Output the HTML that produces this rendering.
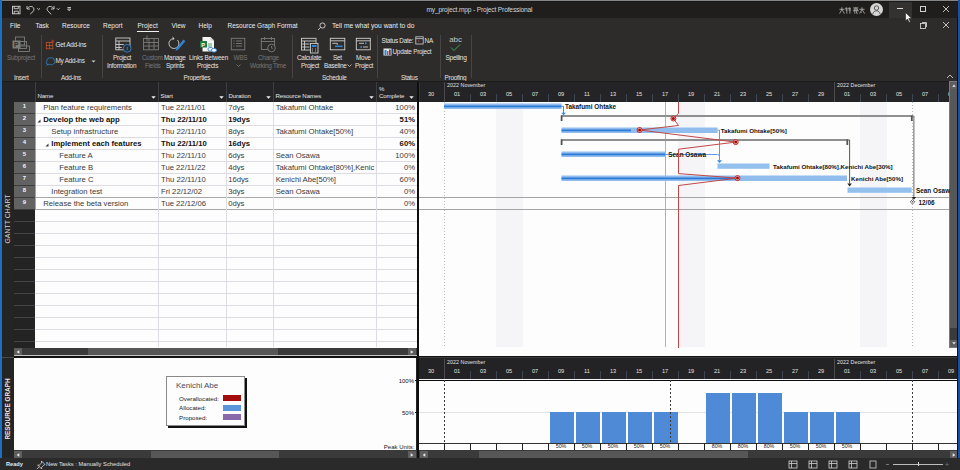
<!DOCTYPE html>
<html><head><meta charset="utf-8">
<style>
*{margin:0;padding:0;box-sizing:border-box}
html,body{width:960px;height:470px;overflow:hidden;background:#232323;font-family:"Liberation Sans",sans-serif}
.a{position:absolute}
.t{position:absolute;white-space:nowrap;line-height:1}
.tab{font-size:6.5px;color:#ececec;top:23.3px}
.rl{color:#e4e4e4}
.rd{color:#777}
.grp{font-size:6.4px;color:#e2e2e2;top:74.7px;letter-spacing:-0.25px}
.sep{width:1px;background:#464543;top:35px;height:43px}
</style></head><body>
<!-- TITLE BAR -->
<div class="a" style="left:0;top:0;width:960px;height:17.5px;background:#1f1e1d"></div>
<div class="a" style="left:0;top:0;width:960px;height:1px;background:#858585"></div>
<div class="a" style="left:0;top:1px;width:960px;height:1px;background:#181818"></div>
<!-- qat icons -->
<svg class="a" style="left:0;top:0" width="80" height="17" viewBox="0 0 80 17">
 <g fill="none" stroke="#d2d2d2" stroke-width="0.9">
  <rect x="12.5" y="6.3" width="7.5" height="7.5"/>
  <path d="M14.2 6.3v2.4h4.1V6.3M14.2 13.8v-2.6h4.1v2.6"/>
  <path d="M27 6v3h3"/>
  <path d="M27.3 8.7c1.3-2.4 4.5-3 6-1.2c1.4 1.8 0.4 4-1.4 5c-0.6 0.5-1.2 1-1.7 1.6"/>
  <path d="M37.2 8.3l1.4 1.4 1.4-1.4"/>
  <path d="M54 6v3h-3"/>
  <path d="M53.7 8.7c-1.3-2.4-4.5-3-6-1.2c-1 1.3-0.6 2.6 0 3.3l3.6 3.6"/>
  <path d="M56.8 8.3l1.4 1.4 1.4-1.4"/>
  <path d="M67.5 7.5h3.4M67.6 9l1.6 1.8 1.6-1.8z"/>
 </g>
</svg>
<div class="t" style="left:426.5px;top:7.2px;font-size:6.6px;letter-spacing:-0.15px;color:#d4d4d4">my_project.mpp - Project Professional</div>
<!-- user name (approximate CJK glyphs) -->
<svg class="a" style="left:839px;top:6.5px" width="27" height="7" viewBox="0 0 27 7">
 <g fill="none" stroke="#bcbcbc" stroke-width="0.75">
  <path d="M0.4 2.3h5M2.9 0.3v2L0.6 6.6M2.9 2.3l2.5 4.3"/>
  <path d="M6.6 1.3h2M7.3 0.4l-0.8 1.8M7.8 1.3v5.3M9.6 1.3h2.3M10.3 0.4l-0.8 1.8M10.9 1.3v5.3M6.6 3h1.8M9.5 3h2.3"/>
  <path d="M14.2 0.9h5.2M16.8 0.2v0.7M15.2 1.8h3.2v1.1h-3.2zM14.3 4.3v-0.7h5v0.7M15.8 4v2.6M17.6 4v2.3h1"/>
  <path d="M20.4 2.3h5.2M23 0.3v2L20.6 6.6M23 2.3l2.6 4.3M22.2 5l0.8 0.8"/>
 </g>
</svg>
<div class="a" style="left:869.5px;top:3px;width:13px;height:13px;border-radius:50%;background:#d6d6d6"></div>
<svg class="a" style="left:869.5px;top:3px" width="13" height="13" viewBox="0 0 13 13">
 <g fill="none" stroke="#4a4a4a" stroke-width="0.9"><circle cx="6.5" cy="5" r="2.2"/><path d="M2.8 11c0.6-2.2 2-3.2 3.7-3.2s3.1 1 3.7 3.2"/></g>
</svg>
<div class="a" style="left:888.5px;top:1.5px;width:23.5px;height:16px;background:#333231"></div>
<div class="a" style="left:897px;top:8px;width:6px;height:1px;background:#d8d8d8"></div>
<div class="a" style="left:919.5px;top:5.5px;width:6px;height:6px;border:1px solid #d0d0d0"></div>
<svg class="a" style="left:942px;top:5px" width="8" height="8" viewBox="0 0 8 8"><path d="M1 1l6 6M7 1l-6 6" stroke="#d0d0d0" stroke-width="0.9"/></svg>

<!-- RIBBON -->
<div class="a" style="left:0;top:17.5px;width:960px;height:63.5px;background:#2d2c2b"></div>
<div class="t tab" style="left:10px">File</div>
<div class="t tab" style="left:35.5px">Task</div>
<div class="t tab" style="left:62px">Resource</div>
<div class="t tab" style="left:103px">Report</div>
<div class="t tab" style="left:137.5px">Project</div>
<div class="a" style="left:137px;top:30.5px;width:22px;height:1.5px;background:#f0f0f0"></div>
<div class="t tab" style="left:171.5px">View</div>
<div class="t tab" style="left:198.5px">Help</div>
<div class="t tab" style="left:227.5px">Resource Graph Format</div>
<svg class="a" style="left:317px;top:21.5px" width="9" height="9" viewBox="0 0 9 9"><g fill="none" stroke="#d6d6d6" stroke-width="0.9"><circle cx="5.5" cy="3.5" r="2.6"/><path d="M3.6 5.4L1 8"/></g></svg>
<div class="t tab" style="left:332px;font-size:6.7px;top:23.2px">Tell me what you want to do</div>
<!-- restore/close secondary -->
<svg class="a" style="left:919px;top:21px" width="9" height="9" viewBox="0 0 9 9"><g fill="none" stroke="#cfcfcf" stroke-width="0.9"><rect x="1.5" y="2.5" width="5" height="5"/><path d="M3 1.5h4.5v4.5"/></g></svg>
<svg class="a" style="left:942px;top:21px" width="8" height="8" viewBox="0 0 8 8"><path d="M1 1l6 6M7 1l-6 6" stroke="#d0d0d0" stroke-width="0.9"/></svg>
<svg class="a" style="left:946px;top:74px" width="8" height="5" viewBox="0 0 8 5"><path d="M1 4l3-3 3 3" fill="none" stroke="#cfcfcf" stroke-width="0.9"/></svg>

<!-- separators -->
<div class="a sep" style="left:40.5px"></div>
<div class="a sep" style="left:102px"></div>
<div class="a sep" style="left:291.5px"></div>
<div class="a sep" style="left:377px"></div>
<div class="a sep" style="left:440px"></div>
<div class="a sep" style="left:471px"></div>

<!-- Insert group -->
<svg class="a" style="left:11px;top:36px" width="20" height="17" viewBox="0 0 20 17">
 <g fill="none" stroke="#7b7b7b" stroke-width="0.9">
  <rect x="4.5" y="1" width="9" height="8"/>
  <rect x="7.5" y="5.5" width="8" height="7"/>
  <rect x="7.5" y="10" width="11" height="5.5"/>
 </g>
 <rect x="1.5" y="4.5" width="8" height="8" fill="#7b7b7b"/>
 <text x="3" y="11" font-size="6.5" font-family="Liberation Sans" font-weight="bold" fill="#2d2c2b">P</text>
</svg>
<div class="t rl rd" style="left:7px;top:55.0px;font-size:6.4px;letter-spacing:-0.25px">Subproject</div>
<div class="t grp" style="left:14px">Insert</div>

<!-- Add-ins group -->
<svg class="a" style="left:45px;top:39px" width="10" height="11" viewBox="0 0 10 11">
 <g fill="none" stroke="#d4562c" stroke-width="0.7"><rect x="1.3" y="3.3" width="6.5" height="6.5"/><path d="M1.3 6.55h6.5M4.55 3.3v6.5"/></g>
 <path d="M7.8 0.6v3M6.3 2.1h3" stroke="#e23b2c" stroke-width="0.7"/>
</svg>
<div class="t rl" style="left:55.5px;top:42px;font-size:6.4px;letter-spacing:-0.25px">Get Add-ins</div>
<svg class="a" style="left:45px;top:56px" width="11" height="10" viewBox="0 0 11 10">
 <path d="M3 8.3c-1.8 0-2.4-2-1.2-3c-0.3-2.2 1.5-3.8 3.6-3.3c1.6-0.8 3.8 0.2 3.8 2.2c1.3 0.8 1 3.4-0.8 3.6c-0.8 1.2-2.6 1.4-3.4 0.4c-0.6 0.3-1.4 0.3-2 0.1z" fill="none" stroke="#2f86d4" stroke-width="0.8"/>
 <path d="M1.2 9.5l1.8-1.3" stroke="#2f86d4" stroke-width="0.8"/>
</svg>
<div class="t rl" style="left:55.5px;top:58.2px;font-size:6.4px;letter-spacing:-0.25px">My Add-ins</div>
<svg class="a" style="left:91px;top:60px" width="5" height="3" viewBox="0 0 5 3"><path d="M0.5 0.5h4l-2 2z" fill="#cfcfcf"/></svg>
<div class="t grp" style="left:61px">Add-ins</div>

<!-- Properties group -->
<svg class="a" style="left:114px;top:36px" width="19" height="18" viewBox="0 0 19 18">
 <g fill="none" stroke="#cfcfcf" stroke-width="0.9">
  <rect x="1.8" y="2" width="14.2" height="11.8"/>
  <path d="M1.8 5h14.2M1.8 8.5h8M1.8 11.5h6M5 5v8.8"/>
 </g>
 <circle cx="13.2" cy="12.3" r="3.9" fill="#2d2c2b" stroke="#2f86d4" stroke-width="0.9"/>
 <path d="M13.2 10.8v3.4" stroke="#2f86d4" stroke-width="0.9"/>
</svg>
<div class="t rl" style="left:113px;top:55.0px;font-size:6.4px;letter-spacing:-0.25px">Project</div>
<div class="t rl" style="left:107px;top:63.0px;font-size:6.4px;letter-spacing:-0.25px">Information</div>
<svg class="a" style="left:141px;top:34px" width="19" height="17" viewBox="0 0 19 17">
 <g fill="none" stroke="#7b7b7b" stroke-width="0.9">
  <rect x="2.5" y="4.5" width="15" height="11.3"/>
  <path d="M2.5 8.5h15M2.5 12h15M8 4.5v11.3M13 4.5v11.3M6 1.5v6M3.5 4.5h5"/>
 </g>
</svg>
<div class="t rl rd" style="left:142px;top:55.0px;font-size:6.4px;letter-spacing:-0.25px">Custom</div>
<div class="t rl rd" style="left:145px;top:63.0px;font-size:6.4px;letter-spacing:-0.25px">Fields</div>
<svg class="a" style="left:166px;top:36px" width="20" height="17" viewBox="0 0 20 17">
 <g fill="none" stroke="#cfcfcf" stroke-width="0.9">
  <path d="M8 2.5a5 5 0 1 0 3.5 1.5"/>
  <path d="M6.5 1l1.6 1.5-1.6 1.6"/>
 </g>
 <path d="M17.5 3.5l-7 8.5-1 3 2.8-1.4 7-8.4z" fill="#2f86d4"/>
</svg>
<div class="t rl" style="left:164px;top:55.0px;font-size:6.4px;letter-spacing:-0.25px">Manage</div>
<div class="t rl" style="left:166px;top:63.0px;font-size:6.4px;letter-spacing:-0.25px">Sprints</div>
<svg class="a" style="left:198px;top:35px" width="20" height="18" viewBox="0 0 20 18">
 <path d="M4.5 2h8l3.5 3.5v11h-11.5z" fill="#f4f4f4"/>
 <path d="M12.5 2v3.5h3.5" fill="#d0d0d0"/>
 <rect x="2" y="6" width="7" height="6.5" fill="#1e7a43"/>
 <text x="3.3" y="11.5" font-size="5.5" font-family="Liberation Sans" font-weight="bold" fill="#fff">P</text>
 <path d="M10 9h4M10 11h4" stroke="#2e8b57" stroke-width="0.8"/>
 <g fill="#f4f4f4" stroke="#2f86d4" stroke-width="0.9"><rect x="10" y="12.5" width="5" height="3.5" rx="1.7"/><rect x="13.5" y="13.5" width="5" height="3.5" rx="1.7"/></g>
</svg>
<div class="t rl" style="left:189px;top:55.0px;font-size:6.3px;letter-spacing:-0.15px">Links Between</div>
<div class="t rl" style="left:197px;top:63.0px;font-size:6.4px;letter-spacing:-0.25px">Projects</div>
<svg class="a" style="left:230px;top:37px" width="16" height="14" viewBox="0 0 16 14">
 <g fill="none" stroke="#7b7b7b" stroke-width="0.9"><rect x="1.3" y="1.3" width="13.5" height="11.5"/><path d="M3.5 4h1M6 4h6M3.5 6.5h1M6 6.5h6M3.5 9h1M6 9h6"/></g>
</svg>
<div class="t rl rd" style="left:233.5px;top:55.0px;font-size:6.4px;letter-spacing:-0.25px">WBS</div>
<svg class="a" style="left:236px;top:64px" width="5" height="3" viewBox="0 0 5 3"><path d="M0.5 0.5l2 2 2-2" fill="none" stroke="#7b7b7b" stroke-width="0.8"/></svg>
<svg class="a" style="left:260px;top:36px" width="18" height="17" viewBox="0 0 18 17">
 <g fill="none" stroke="#7b7b7b" stroke-width="0.9"><rect x="1.3" y="2.5" width="13.3" height="11"/><path d="M1.3 5.5h13.3M4.5 1v3M11.5 1v3"/></g>
 <circle cx="11.5" cy="12" r="3.8" fill="#2d2c2b" stroke="#7b7b7b" stroke-width="0.9"/>
 <path d="M11.5 10v2.2h1.6" fill="none" stroke="#7b7b7b" stroke-width="0.8"/>
</svg>
<div class="t rl rd" style="left:258px;top:55.0px;font-size:6.4px;letter-spacing:-0.25px">Change</div>
<div class="t rl rd" style="left:250px;top:63.0px;font-size:6.4px;letter-spacing:-0.25px">Working Time</div>
<div class="t grp" style="left:183.5px">Properties</div>

<!-- Schedule group -->
<svg class="a" style="left:300px;top:37px" width="20" height="17" viewBox="0 0 20 17">
 <g fill="none" stroke="#cfcfcf" stroke-width="0.9"><rect x="1.5" y="1.3" width="14.5" height="11.7"/><path d="M1.5 4h14.5M1.5 7h8M1.5 10h8M4.5 4v9"/></g>
 <rect x="10.5" y="6.5" width="7.5" height="9.5" fill="#2d2c2b" stroke="#cfcfcf" stroke-width="0.9"/>
 <rect x="12" y="8" width="4.5" height="2" fill="#2f86d4"/>
 <path d="M12 12h1M15 12h1M12 14h1M15 14h1" stroke="#cfcfcf" stroke-width="0.8"/>
</svg>
<div class="t rl" style="left:297px;top:55.0px;font-size:6.4px;letter-spacing:-0.25px">Calculate</div>
<div class="t rl" style="left:301px;top:63.0px;font-size:6.4px;letter-spacing:-0.25px">Project</div>
<svg class="a" style="left:329px;top:37px" width="17" height="14" viewBox="0 0 17 14">
 <g fill="none" stroke="#cfcfcf" stroke-width="0.9"><rect x="1.3" y="1.3" width="14.5" height="11.5"/><path d="M1.3 3.8h14.5"/></g>
 <path d="M3.3 6.3h5v1.6" fill="none" stroke="#bdbdbd" stroke-width="1"/>
 <rect x="6" y="8.5" width="7.5" height="1.6" fill="#2f86d4"/>
</svg>
<div class="t rl" style="left:333px;top:55.0px;font-size:6.4px;letter-spacing:-0.25px">Set</div>
<div class="t rl" style="left:324px;top:63.0px;font-size:6.4px;letter-spacing:-0.25px">Baseline</div>
<svg class="a" style="left:347px;top:64px" width="5" height="3" viewBox="0 0 5 3"><path d="M0.5 0.5l2 2 2-2" fill="none" stroke="#cfcfcf" stroke-width="0.8"/></svg>
<svg class="a" style="left:355px;top:37px" width="17" height="14" viewBox="0 0 17 14">
 <g fill="none" stroke="#cfcfcf" stroke-width="0.9"><rect x="1.3" y="1.3" width="14" height="11.5"/><path d="M1.3 3.8h14M1.3 3.8"/></g>
 <path d="M4 6.3h5M8 10h5" stroke="#bdbdbd" stroke-width="1"/>
 <path d="M10 5l2.5 1.3-2.5 1.3z M7 8.7l-2.5 1.3 2.5 1.3z" fill="#2f86d4"/>
</svg>
<div class="t rl" style="left:356px;top:55.0px;font-size:6.4px;letter-spacing:-0.25px">Move</div>
<div class="t rl" style="left:355px;top:63.0px;font-size:6.4px;letter-spacing:-0.25px">Project</div>
<div class="t grp" style="left:322px">Schedule</div>

<!-- Status group -->
<div class="t rl" style="left:381.5px;top:38px;font-size:6.3px;letter-spacing:-0.25px">Status Date:</div>
<svg class="a" style="left:414.5px;top:35.5px" width="9" height="9" viewBox="0 0 9 9"><g fill="none" stroke="#cfcfcf" stroke-width="0.8"><rect x="0.8" y="0.8" width="7.4" height="7.2"/><path d="M0.8 2.6h7.4"/></g><rect x="3" y="4.5" width="1.2" height="1.2" fill="#c0504d"/></svg>
<div class="t rl" style="left:424.5px;top:38px;font-size:6.4px;letter-spacing:-0.2px">NA</div>
<svg class="a" style="left:382.5px;top:47.5px" width="9" height="8" viewBox="0 0 9 8"><rect x="0.5" y="0.5" width="8" height="7" fill="#e8e8e8"/><rect x="1.5" y="2" width="2" height="5" fill="#2f86d4"/><rect x="4" y="3" width="1.5" height="4" fill="#c0504d"/><rect x="6" y="1.5" width="1.8" height="5.5" fill="#555"/></svg>
<div class="t rl" style="left:392.5px;top:49px;font-size:6.4px;letter-spacing:-0.25px">Update Project</div>
<div class="t grp" style="left:401px">Status</div>

<!-- Proofing group -->
<div class="t rl" style="left:449.3px;top:35.6px;font-size:8px;letter-spacing:-0.15px;color:#c4c4c4">abc</div>
<svg class="a" style="left:450px;top:44px" width="11" height="8" viewBox="0 0 11 8"><path d="M1 3.5l3 3 6-6" fill="none" stroke="#3aa55a" stroke-width="1"/></svg>
<div class="t rl" style="left:445.5px;top:54.6px;font-size:6.6px;letter-spacing:-0.3px">Spelling</div>
<div class="t grp" style="left:444.5px">Proofing</div>
<!-- cursor -->
<svg class="a" style="left:905px;top:12px" width="8" height="11" viewBox="0 0 8 11"><path d="M0.5 0.5v8.5l2-2 1.6 3.4 1.3-0.6-1.6-3.3h2.9z" fill="#f2f2f2" stroke="#222" stroke-width="0.6"/></svg>
<div class="a" style="left:0;top:81px;width:960px;height:377px;background:#232323"></div>
<div class="a" style="left:2px;top:102px;width:12px;height:356px;background:#242424"></div>
<div class="a" style="left:0;top:81px;width:960px;height:1px;background:#1b1b1b"></div>
<div class="a" style="left:2px;top:82px;width:956px;height:20px;background:#242426"></div>
<div class="a" style="left:0;top:0;width:1.5px;height:458px;background:#1a70c2"></div>
<div class="t" style="left:8px;top:219px;font-size:6.8px;color:#d2d2d2;transform:translate(-50%,-50%) rotate(-90deg);letter-spacing:0.1px">GANTT CHART</div>
<div class="t" style="left:8px;top:408.5px;font-size:6.4px;font-weight:bold;color:#e8e8e8;transform:translate(-50%,-50%) rotate(-90deg)">RESOURCE GRAPH</div>
<div class="a" style="left:2px;top:357px;width:12px;height:1px;background:#4a4a4a"></div>
<div class="a" style="left:34.5px;top:82px;width:1px;height:20px;background:#3e3e3e"></div>
<div class="t" style="left:37.5px;top:92.6px;font-size:6.1px;color:#e6e6e6;letter-spacing:-0.1px">Name</div>
<svg class="a" style="left:151px;top:95.5px" width="5" height="3" viewBox="0 0 5 3"><path d="M0.3 0.3h4.4L2.5 2.7z" fill="#f0f0f0"/></svg>
<div class="a" style="left:157.5px;top:82px;width:1px;height:20px;background:#3e3e3e"></div>
<div class="t" style="left:160.5px;top:92.6px;font-size:6.1px;color:#e6e6e6;letter-spacing:-0.1px">Start</div>
<svg class="a" style="left:219px;top:95.5px" width="5" height="3" viewBox="0 0 5 3"><path d="M0.3 0.3h4.4L2.5 2.7z" fill="#f0f0f0"/></svg>
<div class="a" style="left:225.5px;top:82px;width:1px;height:20px;background:#3e3e3e"></div>
<div class="t" style="left:228.5px;top:92.6px;font-size:6.1px;color:#e6e6e6;letter-spacing:-0.1px">Duration</div>
<svg class="a" style="left:266px;top:95.5px" width="5" height="3" viewBox="0 0 5 3"><path d="M0.3 0.3h4.4L2.5 2.7z" fill="#f0f0f0"/></svg>
<div class="a" style="left:272.5px;top:82px;width:1px;height:20px;background:#3e3e3e"></div>
<div class="t" style="left:275.5px;top:92.6px;font-size:6.1px;color:#e6e6e6;letter-spacing:-0.1px">Resource Names</div>
<svg class="a" style="left:369px;top:95.5px" width="5" height="3" viewBox="0 0 5 3"><path d="M0.3 0.3h4.4L2.5 2.7z" fill="#f0f0f0"/></svg>
<div class="a" style="left:375.5px;top:82px;width:1px;height:20px;background:#3e3e3e"></div>
<svg class="a" style="left:409px;top:95.5px" width="5" height="3" viewBox="0 0 5 3"><path d="M0.3 0.3h4.4L2.5 2.7z" fill="#f0f0f0"/></svg>
<div class="t" style="left:379px;top:85.5px;font-size:6px;color:#e6e6e6">%</div>
<div class="t" style="left:379px;top:92.6px;font-size:6.1px;color:#e6e6e6;letter-spacing:-0.1px">Complete</div>
<div class="a" style="left:35px;top:102px;width:382px;height:246px;background:#fdfdfd"></div>
<div class="a" style="left:14px;top:102px;width:21px;height:11px;background:#626262"></div>
<div class="a" style="left:14px;top:113px;width:21px;height:1px;background:#3c3c3c"></div>
<div class="t" style="left:24.5px;top:103.5px;font-size:5.9px;font-weight:bold;color:#f6f6f6;transform:translateX(-50%)">1</div>
<div class="a" style="left:14px;top:114px;width:21px;height:11px;background:#626262"></div>
<div class="a" style="left:14px;top:125px;width:21px;height:1px;background:#3c3c3c"></div>
<div class="t" style="left:24.5px;top:115.5px;font-size:5.9px;font-weight:bold;color:#f6f6f6;transform:translateX(-50%)">2</div>
<div class="a" style="left:14px;top:126px;width:21px;height:11px;background:#626262"></div>
<div class="a" style="left:14px;top:137px;width:21px;height:1px;background:#3c3c3c"></div>
<div class="t" style="left:24.5px;top:127.5px;font-size:5.9px;font-weight:bold;color:#f6f6f6;transform:translateX(-50%)">3</div>
<div class="a" style="left:14px;top:138px;width:21px;height:11px;background:#626262"></div>
<div class="a" style="left:14px;top:149px;width:21px;height:1px;background:#3c3c3c"></div>
<div class="t" style="left:24.5px;top:139.5px;font-size:5.9px;font-weight:bold;color:#f6f6f6;transform:translateX(-50%)">4</div>
<div class="a" style="left:14px;top:150px;width:21px;height:11px;background:#626262"></div>
<div class="a" style="left:14px;top:161px;width:21px;height:1px;background:#3c3c3c"></div>
<div class="t" style="left:24.5px;top:151.5px;font-size:5.9px;font-weight:bold;color:#f6f6f6;transform:translateX(-50%)">5</div>
<div class="a" style="left:14px;top:162px;width:21px;height:11px;background:#626262"></div>
<div class="a" style="left:14px;top:173px;width:21px;height:1px;background:#3c3c3c"></div>
<div class="t" style="left:24.5px;top:163.5px;font-size:5.9px;font-weight:bold;color:#f6f6f6;transform:translateX(-50%)">6</div>
<div class="a" style="left:14px;top:174px;width:21px;height:11px;background:#626262"></div>
<div class="a" style="left:14px;top:185px;width:21px;height:1px;background:#3c3c3c"></div>
<div class="t" style="left:24.5px;top:175.5px;font-size:5.9px;font-weight:bold;color:#f6f6f6;transform:translateX(-50%)">7</div>
<div class="a" style="left:14px;top:186px;width:21px;height:11px;background:#626262"></div>
<div class="a" style="left:14px;top:197px;width:21px;height:1px;background:#3c3c3c"></div>
<div class="t" style="left:24.5px;top:187.5px;font-size:5.9px;font-weight:bold;color:#f6f6f6;transform:translateX(-50%)">8</div>
<div class="a" style="left:14px;top:198px;width:21px;height:11px;background:#626262"></div>
<div class="a" style="left:14px;top:209px;width:21px;height:1px;background:#3c3c3c"></div>
<div class="t" style="left:24.5px;top:199.5px;font-size:5.9px;font-weight:bold;color:#f6f6f6;transform:translateX(-50%)">9</div>
<div class="a" style="left:14px;top:221px;width:21px;height:1px;background:#444"></div>
<div class="a" style="left:14px;top:233px;width:21px;height:1px;background:#444"></div>
<div class="a" style="left:14px;top:245px;width:21px;height:1px;background:#444"></div>
<div class="a" style="left:14px;top:257px;width:21px;height:1px;background:#444"></div>
<div class="a" style="left:14px;top:269px;width:21px;height:1px;background:#444"></div>
<div class="a" style="left:14px;top:281px;width:21px;height:1px;background:#444"></div>
<div class="a" style="left:14px;top:293px;width:21px;height:1px;background:#444"></div>
<div class="a" style="left:14px;top:305px;width:21px;height:1px;background:#444"></div>
<div class="a" style="left:14px;top:317px;width:21px;height:1px;background:#444"></div>
<div class="a" style="left:14px;top:329px;width:21px;height:1px;background:#444"></div>
<div class="a" style="left:14px;top:341px;width:21px;height:1px;background:#444"></div>
<div class="a" style="left:35px;top:113px;width:382px;height:1px;background:#dcdce2"></div>
<div class="a" style="left:35px;top:125px;width:382px;height:1px;background:#dcdce2"></div>
<div class="a" style="left:35px;top:137px;width:382px;height:1px;background:#dcdce2"></div>
<div class="a" style="left:35px;top:149px;width:382px;height:1px;background:#dcdce2"></div>
<div class="a" style="left:35px;top:161px;width:382px;height:1px;background:#dcdce2"></div>
<div class="a" style="left:35px;top:173px;width:382px;height:1px;background:#dcdce2"></div>
<div class="a" style="left:35px;top:185px;width:382px;height:1px;background:#dcdce2"></div>
<div class="a" style="left:35px;top:197px;width:382px;height:1px;background:#a8a8a8"></div>
<div class="a" style="left:35px;top:209px;width:382px;height:1px;background:#a8a8a8"></div>
<div class="a" style="left:35px;top:221px;width:382px;height:1px;background:#dcdce2"></div>
<div class="a" style="left:35px;top:233px;width:382px;height:1px;background:#dcdce2"></div>
<div class="a" style="left:35px;top:245px;width:382px;height:1px;background:#dcdce2"></div>
<div class="a" style="left:35px;top:257px;width:382px;height:1px;background:#dcdce2"></div>
<div class="a" style="left:35px;top:269px;width:382px;height:1px;background:#dcdce2"></div>
<div class="a" style="left:35px;top:281px;width:382px;height:1px;background:#dcdce2"></div>
<div class="a" style="left:35px;top:293px;width:382px;height:1px;background:#dcdce2"></div>
<div class="a" style="left:35px;top:305px;width:382px;height:1px;background:#dcdce2"></div>
<div class="a" style="left:35px;top:317px;width:382px;height:1px;background:#dcdce2"></div>
<div class="a" style="left:35px;top:329px;width:382px;height:1px;background:#dcdce2"></div>
<div class="a" style="left:35px;top:341px;width:382px;height:1px;background:#dcdce2"></div>
<div class="a" style="left:157.5px;top:102px;width:1px;height:245px;background:#dcdce2"></div>
<div class="a" style="left:225.5px;top:102px;width:1px;height:245px;background:#dcdce2"></div>
<div class="a" style="left:272.5px;top:102px;width:1px;height:245px;background:#dcdce2"></div>
<div class="a" style="left:375.5px;top:102px;width:1px;height:245px;background:#dcdce2"></div>
<div class="a" style="left:35px;top:102px;width:0.7px;height:108px;background:#86b886"></div>
<div class="t" style="left:43.3px;top:104.0px;font-size:7.7px;color:#3a3a3a">Plan feature requirements</div>
<div class="t" style="left:161px;top:104.0px;font-size:7.7px;color:#3a3a3a">Tue 22/11/01</div>
<div class="t" style="left:228.2px;top:104.0px;font-size:7.7px;color:#3a3a3a">7dys</div>
<div class="a" style="left:273px;top:102px;width:102px;height:11px;overflow:hidden"><div class="t" style="left:2.7px;top:2px;font-size:7.7px;color:#3a3a3a">Takafumi Ohtake</div></div>
<div class="t" style="right:545px;top:104.0px;font-size:7.7px;color:#3a3a3a">100%</div>
<svg class="a" style="left:37px;top:118.5px" width="4" height="4" viewBox="0 0 4 4"><path d="M3.5 0.5v3h-3z" fill="#333"/></svg>
<div class="t" style="left:43.3px;top:116.0px;font-size:7.7px;font-weight:bold;color:#111">Develop the web app</div>
<div class="t" style="left:161px;top:116.0px;font-size:7.7px;font-weight:bold;color:#111">Thu 22/11/10</div>
<div class="t" style="left:228.2px;top:116.0px;font-size:7.7px;font-weight:bold;color:#111">19dys</div>
<div class="t" style="right:545px;top:116.0px;font-size:7.7px;font-weight:bold;color:#111">51%</div>
<div class="t" style="left:51.3px;top:128.0px;font-size:7.7px;color:#3a3a3a">Setup infrastructure</div>
<div class="t" style="left:161px;top:128.0px;font-size:7.7px;color:#3a3a3a">Thu 22/11/10</div>
<div class="t" style="left:228.2px;top:128.0px;font-size:7.7px;color:#3a3a3a">8dys</div>
<div class="a" style="left:273px;top:126px;width:102px;height:11px;overflow:hidden"><div class="t" style="left:2.7px;top:2px;font-size:7.7px;color:#3a3a3a">Takafumi Ohtake[50%]</div></div>
<div class="t" style="right:545px;top:128.0px;font-size:7.7px;color:#3a3a3a">40%</div>
<svg class="a" style="left:45px;top:142.5px" width="4" height="4" viewBox="0 0 4 4"><path d="M3.5 0.5v3h-3z" fill="#333"/></svg>
<div class="t" style="left:51.3px;top:140.0px;font-size:7.7px;font-weight:bold;color:#111">Implement each features</div>
<div class="t" style="left:161px;top:140.0px;font-size:7.7px;font-weight:bold;color:#111">Thu 22/11/10</div>
<div class="t" style="left:228.2px;top:140.0px;font-size:7.7px;font-weight:bold;color:#111">16dys</div>
<div class="t" style="right:545px;top:140.0px;font-size:7.7px;font-weight:bold;color:#111">60%</div>
<div class="t" style="left:59.3px;top:152.0px;font-size:7.7px;color:#3a3a3a">Feature A</div>
<div class="t" style="left:161px;top:152.0px;font-size:7.7px;color:#3a3a3a">Thu 22/11/10</div>
<div class="t" style="left:228.2px;top:152.0px;font-size:7.7px;color:#3a3a3a">6dys</div>
<div class="a" style="left:273px;top:150px;width:102px;height:11px;overflow:hidden"><div class="t" style="left:2.7px;top:2px;font-size:7.7px;color:#3a3a3a">Sean Osawa</div></div>
<div class="t" style="right:545px;top:152.0px;font-size:7.7px;color:#3a3a3a">100%</div>
<div class="t" style="left:59.3px;top:164.0px;font-size:7.7px;color:#3a3a3a">Feature B</div>
<div class="t" style="left:161px;top:164.0px;font-size:7.7px;color:#3a3a3a">Tue 22/11/22</div>
<div class="t" style="left:228.2px;top:164.0px;font-size:7.7px;color:#3a3a3a">4dys</div>
<div class="a" style="left:273px;top:162px;width:102px;height:11px;overflow:hidden"><div class="t" style="left:2.7px;top:2px;font-size:7.7px;color:#3a3a3a">Takafumi Ohtake[80%],Kenic</div></div>
<div class="t" style="right:545px;top:164.0px;font-size:7.7px;color:#3a3a3a">0%</div>
<div class="t" style="left:59.3px;top:176.0px;font-size:7.7px;color:#3a3a3a">Feature C</div>
<div class="t" style="left:161px;top:176.0px;font-size:7.7px;color:#3a3a3a">Thu 22/11/10</div>
<div class="t" style="left:228.2px;top:176.0px;font-size:7.7px;color:#3a3a3a">16dys</div>
<div class="a" style="left:273px;top:174px;width:102px;height:11px;overflow:hidden"><div class="t" style="left:2.7px;top:2px;font-size:7.7px;color:#3a3a3a">Kenichi Abe[50%]</div></div>
<div class="t" style="right:545px;top:176.0px;font-size:7.7px;color:#3a3a3a">60%</div>
<div class="t" style="left:51.3px;top:188.0px;font-size:7.7px;color:#3a3a3a">Integration test</div>
<div class="t" style="left:161px;top:188.0px;font-size:7.7px;color:#3a3a3a">Fri 22/12/02</div>
<div class="t" style="left:228.2px;top:188.0px;font-size:7.7px;color:#3a3a3a">3dys</div>
<div class="a" style="left:273px;top:186px;width:102px;height:11px;overflow:hidden"><div class="t" style="left:2.7px;top:2px;font-size:7.7px;color:#3a3a3a">Sean Osawa</div></div>
<div class="t" style="right:545px;top:188.0px;font-size:7.7px;color:#3a3a3a">0%</div>
<div class="t" style="left:43.3px;top:200.0px;font-size:7.7px;color:#3a3a3a">Release the beta version</div>
<div class="t" style="left:161px;top:200.0px;font-size:7.7px;color:#3a3a3a">Tue 22/12/06</div>
<div class="t" style="left:228.2px;top:200.0px;font-size:7.7px;color:#3a3a3a">0dys</div>
<div class="t" style="right:545px;top:200.0px;font-size:7.7px;color:#3a3a3a">0%</div>
<div class="a" style="left:14px;top:347.5px;width:403px;height:8px;background:#3a3a3a"></div>
<div class="a" style="left:14px;top:348px;width:8px;height:7px;background:#5e5e5e"></div>
<svg class="a" style="left:16px;top:349.5px" width="4" height="4" viewBox="0 0 4 4"><path d="M3.3 0.3v3.4L0.6 2z" fill="#e8e8e8"/></svg>
<div class="a" style="left:87.5px;top:348px;width:190.5px;height:7px;background:#575757"></div>
<div class="a" style="left:408px;top:348px;width:8px;height:7px;background:#5e5e5e"></div>
<svg class="a" style="left:410px;top:349.5px" width="4" height="4" viewBox="0 0 4 4"><path d="M0.7 0.3v3.4L3.4 2z" fill="#e8e8e8"/></svg>
<div class="a" style="left:14px;top:355px;width:403px;height:1px;background:#c4c4c4"></div>
<div class="a" style="left:416.6px;top:82px;width:2.4px;height:376px;background:#0e0e0e"></div>
<div class="a" style="left:419px;top:102px;width:531px;height:254px;background:#fdfdfd;overflow:hidden" id="gantt">
<div class="a" style="left:77px;top:0;width:26.8px;height:245px;background:#f5f5f8"></div>
<div class="a" style="left:259px;top:0;width:26.8px;height:245px;background:#f5f5f8"></div>
<div class="a" style="left:441px;top:0;width:26.8px;height:245px;background:#f5f5f8"></div>
<div class="a" style="left:24.5px;top:0;width:1px;height:245px;background:repeating-linear-gradient(#b8b8b8 0 1px,transparent 1px 3px)"></div>
<div class="a" style="left:492.5px;top:0;width:1px;height:245px;background:repeating-linear-gradient(#b8b8b8 0 1px,transparent 1px 3px)"></div>
<div class="a" style="left:246.0px;top:0;width:1px;height:245px;background:#93c793"></div>
<div class="a" style="left:0;top:95px;width:531px;height:1px;background:#a4a4a4"></div>
<div class="a" style="left:0;top:107px;width:531px;height:1px;background:#a4a4a4"></div>
</div>
<div class="t" style="left:431px;top:91.8px;font-size:5.6px;color:#e2e2e2;transform:translateX(-50%)">30</div>
<div class="t" style="left:457px;top:91.8px;font-size:5.6px;color:#e2e2e2;transform:translateX(-50%)">01</div>
<div class="a" style="left:443.5px;top:94px;width:1px;height:8px;background:#3e4654"></div>
<div class="t" style="left:483px;top:91.8px;font-size:5.6px;color:#e2e2e2;transform:translateX(-50%)">03</div>
<div class="a" style="left:469.5px;top:94px;width:1px;height:8px;background:#3e4654"></div>
<div class="t" style="left:509px;top:91.8px;font-size:5.6px;color:#e2e2e2;transform:translateX(-50%)">05</div>
<div class="a" style="left:495.5px;top:94px;width:1px;height:8px;background:#3e4654"></div>
<div class="t" style="left:535px;top:91.8px;font-size:5.6px;color:#e2e2e2;transform:translateX(-50%)">07</div>
<div class="a" style="left:521.5px;top:94px;width:1px;height:8px;background:#3e4654"></div>
<div class="t" style="left:561px;top:91.8px;font-size:5.6px;color:#e2e2e2;transform:translateX(-50%)">09</div>
<div class="a" style="left:547.5px;top:94px;width:1px;height:8px;background:#3e4654"></div>
<div class="t" style="left:587px;top:91.8px;font-size:5.6px;color:#e2e2e2;transform:translateX(-50%)">11</div>
<div class="a" style="left:573.5px;top:94px;width:1px;height:8px;background:#3e4654"></div>
<div class="t" style="left:613px;top:91.8px;font-size:5.6px;color:#e2e2e2;transform:translateX(-50%)">13</div>
<div class="a" style="left:599.5px;top:94px;width:1px;height:8px;background:#3e4654"></div>
<div class="t" style="left:639px;top:91.8px;font-size:5.6px;color:#e2e2e2;transform:translateX(-50%)">15</div>
<div class="a" style="left:625.5px;top:94px;width:1px;height:8px;background:#3e4654"></div>
<div class="t" style="left:665px;top:91.8px;font-size:5.6px;color:#e2e2e2;transform:translateX(-50%)">17</div>
<div class="a" style="left:651.5px;top:94px;width:1px;height:8px;background:#3e4654"></div>
<div class="t" style="left:691px;top:91.8px;font-size:5.6px;color:#e2e2e2;transform:translateX(-50%)">19</div>
<div class="a" style="left:677.5px;top:94px;width:1px;height:8px;background:#3e4654"></div>
<div class="t" style="left:717px;top:91.8px;font-size:5.6px;color:#e2e2e2;transform:translateX(-50%)">21</div>
<div class="a" style="left:703.5px;top:94px;width:1px;height:8px;background:#3e4654"></div>
<div class="t" style="left:743px;top:91.8px;font-size:5.6px;color:#e2e2e2;transform:translateX(-50%)">23</div>
<div class="a" style="left:729.5px;top:94px;width:1px;height:8px;background:#3e4654"></div>
<div class="t" style="left:769px;top:91.8px;font-size:5.6px;color:#e2e2e2;transform:translateX(-50%)">25</div>
<div class="a" style="left:755.5px;top:94px;width:1px;height:8px;background:#3e4654"></div>
<div class="t" style="left:795px;top:91.8px;font-size:5.6px;color:#e2e2e2;transform:translateX(-50%)">27</div>
<div class="a" style="left:781.5px;top:94px;width:1px;height:8px;background:#3e4654"></div>
<div class="t" style="left:821px;top:91.8px;font-size:5.6px;color:#e2e2e2;transform:translateX(-50%)">29</div>
<div class="a" style="left:807.5px;top:94px;width:1px;height:8px;background:#3e4654"></div>
<div class="t" style="left:847px;top:91.8px;font-size:5.6px;color:#e2e2e2;transform:translateX(-50%)">01</div>
<div class="a" style="left:833.5px;top:94px;width:1px;height:8px;background:#3e4654"></div>
<div class="t" style="left:873px;top:91.8px;font-size:5.6px;color:#e2e2e2;transform:translateX(-50%)">03</div>
<div class="a" style="left:859.5px;top:94px;width:1px;height:8px;background:#3e4654"></div>
<div class="t" style="left:899px;top:91.8px;font-size:5.6px;color:#e2e2e2;transform:translateX(-50%)">05</div>
<div class="a" style="left:885.5px;top:94px;width:1px;height:8px;background:#3e4654"></div>
<div class="t" style="left:925px;top:91.8px;font-size:5.6px;color:#e2e2e2;transform:translateX(-50%)">07</div>
<div class="a" style="left:911.5px;top:94px;width:1px;height:8px;background:#3e4654"></div>
<div class="t" style="left:951px;top:91.8px;font-size:5.6px;color:#e2e2e2;transform:translateX(-50%)">09</div>
<div class="a" style="left:937.5px;top:94px;width:1px;height:8px;background:#3e4654"></div>
<div class="a" style="left:443.5px;top:82.3px;width:1px;height:19.700000000000003px;background:#4c4c4c"></div>
<div class="t" style="left:447px;top:83.3px;font-size:5.3px;color:#e2e2e2;letter-spacing:0.05px">2022 November</div>
<div class="a" style="left:833.5px;top:82.3px;width:1px;height:19.700000000000003px;background:#4c4c4c"></div>
<div class="t" style="left:837px;top:83.3px;font-size:5.3px;color:#e2e2e2;letter-spacing:0.05px">2022 December</div>
<div class="a" style="left:419px;top:82px;width:1px;height:20px;background:#333"></div>
<div class="a" style="left:949px;top:81px;width:9px;height:267px;background:#7a7a7a"></div>
<div class="a" style="left:950px;top:82px;width:7px;height:265px;background:#3a3a3a"></div>
<div class="a" style="left:950px;top:82px;width:7px;height:7px;background:#5e5e5e"></div>
<svg class="a" style="left:951.5px;top:84px" width="4" height="3" viewBox="0 0 4 3"><path d="M0.2 2.8h3.6L2 0.4z" fill="#e8e8e8"/></svg>
<div class="a" style="left:950px;top:89px;width:7px;height:239px;background:#575757"></div>
<div class="a" style="left:950px;top:339.5px;width:7px;height:7px;background:#5e5e5e"></div>
<svg class="a" style="left:951.5px;top:341.5px" width="4" height="3" viewBox="0 0 4 3"><path d="M0.2 0.2h3.6L2 2.6z" fill="#e8e8e8"/></svg>
<div class="a" style="left:949.5px;top:348px;width:8px;height:8px;background:#fdfdfd"></div>
<div class="a" style="left:14px;top:356px;width:944px;height:2px;background:#121212"></div>
<div class="a" style="left:14px;top:358px;width:402px;height:92px;background:#fdfdfd"></div>
<div class="a" style="left:419px;top:358px;width:538.5px;height:21px;background:#232325"></div>
<div class="a" style="left:419px;top:357px;width:538.5px;height:1px;background:#3a3a3a"></div>
<div class="t" style="left:431px;top:368.6px;font-size:5.6px;color:#e2e2e2;transform:translateX(-50%)">30</div>
<div class="t" style="left:457px;top:368.6px;font-size:5.6px;color:#e2e2e2;transform:translateX(-50%)">01</div>
<div class="a" style="left:443.5px;top:371px;width:1px;height:8px;background:#3e4654"></div>
<div class="t" style="left:483px;top:368.6px;font-size:5.6px;color:#e2e2e2;transform:translateX(-50%)">03</div>
<div class="a" style="left:469.5px;top:371px;width:1px;height:8px;background:#3e4654"></div>
<div class="t" style="left:509px;top:368.6px;font-size:5.6px;color:#e2e2e2;transform:translateX(-50%)">05</div>
<div class="a" style="left:495.5px;top:371px;width:1px;height:8px;background:#3e4654"></div>
<div class="t" style="left:535px;top:368.6px;font-size:5.6px;color:#e2e2e2;transform:translateX(-50%)">07</div>
<div class="a" style="left:521.5px;top:371px;width:1px;height:8px;background:#3e4654"></div>
<div class="t" style="left:561px;top:368.6px;font-size:5.6px;color:#e2e2e2;transform:translateX(-50%)">09</div>
<div class="a" style="left:547.5px;top:371px;width:1px;height:8px;background:#3e4654"></div>
<div class="t" style="left:587px;top:368.6px;font-size:5.6px;color:#e2e2e2;transform:translateX(-50%)">11</div>
<div class="a" style="left:573.5px;top:371px;width:1px;height:8px;background:#3e4654"></div>
<div class="t" style="left:613px;top:368.6px;font-size:5.6px;color:#e2e2e2;transform:translateX(-50%)">13</div>
<div class="a" style="left:599.5px;top:371px;width:1px;height:8px;background:#3e4654"></div>
<div class="t" style="left:639px;top:368.6px;font-size:5.6px;color:#e2e2e2;transform:translateX(-50%)">15</div>
<div class="a" style="left:625.5px;top:371px;width:1px;height:8px;background:#3e4654"></div>
<div class="t" style="left:665px;top:368.6px;font-size:5.6px;color:#e2e2e2;transform:translateX(-50%)">17</div>
<div class="a" style="left:651.5px;top:371px;width:1px;height:8px;background:#3e4654"></div>
<div class="t" style="left:691px;top:368.6px;font-size:5.6px;color:#e2e2e2;transform:translateX(-50%)">19</div>
<div class="a" style="left:677.5px;top:371px;width:1px;height:8px;background:#3e4654"></div>
<div class="t" style="left:717px;top:368.6px;font-size:5.6px;color:#e2e2e2;transform:translateX(-50%)">21</div>
<div class="a" style="left:703.5px;top:371px;width:1px;height:8px;background:#3e4654"></div>
<div class="t" style="left:743px;top:368.6px;font-size:5.6px;color:#e2e2e2;transform:translateX(-50%)">23</div>
<div class="a" style="left:729.5px;top:371px;width:1px;height:8px;background:#3e4654"></div>
<div class="t" style="left:769px;top:368.6px;font-size:5.6px;color:#e2e2e2;transform:translateX(-50%)">25</div>
<div class="a" style="left:755.5px;top:371px;width:1px;height:8px;background:#3e4654"></div>
<div class="t" style="left:795px;top:368.6px;font-size:5.6px;color:#e2e2e2;transform:translateX(-50%)">27</div>
<div class="a" style="left:781.5px;top:371px;width:1px;height:8px;background:#3e4654"></div>
<div class="t" style="left:821px;top:368.6px;font-size:5.6px;color:#e2e2e2;transform:translateX(-50%)">29</div>
<div class="a" style="left:807.5px;top:371px;width:1px;height:8px;background:#3e4654"></div>
<div class="t" style="left:847px;top:368.6px;font-size:5.6px;color:#e2e2e2;transform:translateX(-50%)">01</div>
<div class="a" style="left:833.5px;top:371px;width:1px;height:8px;background:#3e4654"></div>
<div class="t" style="left:873px;top:368.6px;font-size:5.6px;color:#e2e2e2;transform:translateX(-50%)">03</div>
<div class="a" style="left:859.5px;top:371px;width:1px;height:8px;background:#3e4654"></div>
<div class="t" style="left:899px;top:368.6px;font-size:5.6px;color:#e2e2e2;transform:translateX(-50%)">05</div>
<div class="a" style="left:885.5px;top:371px;width:1px;height:8px;background:#3e4654"></div>
<div class="t" style="left:925px;top:368.6px;font-size:5.6px;color:#e2e2e2;transform:translateX(-50%)">07</div>
<div class="a" style="left:911.5px;top:371px;width:1px;height:8px;background:#3e4654"></div>
<div class="t" style="left:951px;top:368.6px;font-size:5.6px;color:#e2e2e2;transform:translateX(-50%)">09</div>
<div class="a" style="left:937.5px;top:371px;width:1px;height:8px;background:#3e4654"></div>
<div class="a" style="left:443.5px;top:358.9px;width:1px;height:20.100000000000023px;background:#4c4c4c"></div>
<div class="t" style="left:447px;top:359.9px;font-size:5.3px;color:#e2e2e2;letter-spacing:0.05px">2022 November</div>
<div class="a" style="left:833.5px;top:358.9px;width:1px;height:20.100000000000023px;background:#4c4c4c"></div>
<div class="t" style="left:837px;top:359.9px;font-size:5.3px;color:#e2e2e2;letter-spacing:0.05px">2022 December</div>
<div class="a" style="left:419px;top:379px;width:538.5px;height:1px;background:#f4f4f4"></div>
<div class="a" style="left:419px;top:380px;width:538.5px;height:1.2px;background:#0a0a0a"></div>
<div class="a" style="left:419px;top:381px;width:538.5px;height:62.5px;background:#fdfdfd"></div>
<div class="a" style="left:419px;top:412px;width:538.5px;height:1px;background:#e2e2e2"></div>
<div class="a" style="left:549.5px;top:412.2px;width:24.5px;height:31.3px;background:#4f8ad6"></div>
<div class="a" style="left:575.5px;top:412.2px;width:24.5px;height:31.3px;background:#4f8ad6"></div>
<div class="a" style="left:601.5px;top:412.2px;width:24.5px;height:31.3px;background:#4f8ad6"></div>
<div class="a" style="left:627.5px;top:412.2px;width:24.5px;height:31.3px;background:#4f8ad6"></div>
<div class="a" style="left:653.5px;top:412.2px;width:24.5px;height:31.3px;background:#4f8ad6"></div>
<div class="a" style="left:705.5px;top:393.42px;width:24.5px;height:50.08px;background:#4f8ad6"></div>
<div class="a" style="left:731.5px;top:393.42px;width:24.5px;height:50.08px;background:#4f8ad6"></div>
<div class="a" style="left:757.5px;top:393.42px;width:24.5px;height:50.08px;background:#4f8ad6"></div>
<div class="a" style="left:783.5px;top:412.2px;width:24.5px;height:31.3px;background:#4f8ad6"></div>
<div class="a" style="left:809.5px;top:412.2px;width:24.5px;height:31.3px;background:#4f8ad6"></div>
<div class="a" style="left:835.5px;top:412.2px;width:24.5px;height:31.3px;background:#4f8ad6"></div>
<div class="a" style="left:443.5px;top:380px;width:1px;height:70px;background:repeating-linear-gradient(#3a3a3a 0 2px,transparent 2px 4px)"></div>
<div class="a" style="left:669.5px;top:380px;width:1px;height:70px;background:repeating-linear-gradient(#3a3a3a 0 2px,transparent 2px 4px)"></div>
<div class="a" style="left:911.5px;top:380px;width:1px;height:70px;background:repeating-linear-gradient(#3a3a3a 0 2px,transparent 2px 4px)"></div>
<div class="a" style="left:419px;top:443px;width:538.5px;height:7px;background:#fdfdfd"></div>
<div class="a" style="left:419px;top:443px;width:538.5px;height:1px;background:#333"></div>
<div class="a" style="left:443.5px;top:443px;width:1px;height:7px;background:#222"></div>
<div class="a" style="left:469.5px;top:443px;width:1px;height:7px;background:#222"></div>
<div class="a" style="left:495.5px;top:443px;width:1px;height:7px;background:#222"></div>
<div class="a" style="left:521.5px;top:443px;width:1px;height:7px;background:#222"></div>
<div class="a" style="left:547.5px;top:443px;width:1px;height:7px;background:#222"></div>
<div class="a" style="left:573.5px;top:443px;width:1px;height:7px;background:#222"></div>
<div class="a" style="left:599.5px;top:443px;width:1px;height:7px;background:#222"></div>
<div class="a" style="left:625.5px;top:443px;width:1px;height:7px;background:#222"></div>
<div class="a" style="left:651.5px;top:443px;width:1px;height:7px;background:#222"></div>
<div class="a" style="left:677.5px;top:443px;width:1px;height:7px;background:#222"></div>
<div class="a" style="left:703.5px;top:443px;width:1px;height:7px;background:#222"></div>
<div class="a" style="left:729.5px;top:443px;width:1px;height:7px;background:#222"></div>
<div class="a" style="left:755.5px;top:443px;width:1px;height:7px;background:#222"></div>
<div class="a" style="left:781.5px;top:443px;width:1px;height:7px;background:#222"></div>
<div class="a" style="left:807.5px;top:443px;width:1px;height:7px;background:#222"></div>
<div class="a" style="left:833.5px;top:443px;width:1px;height:7px;background:#222"></div>
<div class="a" style="left:859.5px;top:443px;width:1px;height:7px;background:#222"></div>
<div class="a" style="left:885.5px;top:443px;width:1px;height:7px;background:#222"></div>
<div class="a" style="left:911.5px;top:443px;width:1px;height:7px;background:#222"></div>
<div class="a" style="left:937.5px;top:443px;width:1px;height:7px;background:#222"></div>
<div class="t" style="left:561px;top:444.2px;font-size:5.3px;color:#222;transform:translateX(-50%)">50%</div>
<div class="t" style="left:587px;top:444.2px;font-size:5.3px;color:#222;transform:translateX(-50%)">50%</div>
<div class="t" style="left:613px;top:444.2px;font-size:5.3px;color:#222;transform:translateX(-50%)">50%</div>
<div class="t" style="left:639px;top:444.2px;font-size:5.3px;color:#222;transform:translateX(-50%)">50%</div>
<div class="t" style="left:665px;top:444.2px;font-size:5.3px;color:#222;transform:translateX(-50%)">50%</div>
<div class="t" style="left:717px;top:444.2px;font-size:5.3px;color:#222;transform:translateX(-50%)">80%</div>
<div class="t" style="left:743px;top:444.2px;font-size:5.3px;color:#222;transform:translateX(-50%)">80%</div>
<div class="t" style="left:769px;top:444.2px;font-size:5.3px;color:#222;transform:translateX(-50%)">80%</div>
<div class="t" style="left:795px;top:444.2px;font-size:5.3px;color:#222;transform:translateX(-50%)">50%</div>
<div class="t" style="left:821px;top:444.2px;font-size:5.3px;color:#222;transform:translateX(-50%)">50%</div>
<div class="t" style="left:847px;top:444.2px;font-size:5.3px;color:#222;transform:translateX(-50%)">50%</div>
<div class="t" style="right:546px;top:377.6px;font-size:6px;color:#111">100%</div>
<div class="a" style="left:415px;top:380px;width:2px;height:1px;background:#111"></div>
<div class="a" style="left:415px;top:412px;width:2px;height:1px;background:#111"></div>
<div class="t" style="right:546px;top:409.6px;font-size:6px;color:#111">50%</div>
<div class="t" style="right:545.5px;top:443.6px;font-size:6px;color:#222">Peak Units:</div>
<div class="a" style="left:168px;top:378px;width:79px;height:49.5px;background:#111"></div>
<div class="a" style="left:166px;top:376px;width:79px;height:49.5px;background:#fdfdfd;border:1px solid #8a8a8a"></div>
<div class="t" style="left:176px;top:381.5px;font-size:8px;color:#4a4a5a">Kenichi Abe</div>
<div class="t" style="left:179px;top:395.5px;font-size:6.2px;color:#1a1a1a">Overallocated:</div>
<div class="t" style="left:179px;top:405px;font-size:6.2px;color:#1a1a1a">Allocated:</div>
<div class="t" style="left:179px;top:414.6px;font-size:6.2px;color:#1a1a1a">Proposed:</div>
<div class="a" style="left:223px;top:395px;width:17.5px;height:6px;background:#a50c0c"></div>
<div class="a" style="left:223px;top:404.7px;width:17.5px;height:6px;background:#5b95dc"></div>
<div class="a" style="left:223px;top:414.3px;width:17.5px;height:6px;background:#8a68ac"></div>
<div class="a" style="left:14px;top:450px;width:403px;height:8px;background:#3a3a3a"></div>
<div class="a" style="left:14px;top:451px;width:8px;height:7px;background:#5e5e5e"></div>
<svg class="a" style="left:16px;top:452.5px" width="4" height="4" viewBox="0 0 4 4"><path d="M3.3 0.3v3.4L0.6 2z" fill="#e8e8e8"/></svg>
<div class="a" style="left:151px;top:451px;width:128px;height:7px;background:#575757"></div>
<div class="a" style="left:408px;top:451px;width:8px;height:7px;background:#5e5e5e"></div>
<svg class="a" style="left:410px;top:452.5px" width="4" height="4" viewBox="0 0 4 4"><path d="M0.7 0.3v3.4L3.4 2z" fill="#e8e8e8"/></svg>
<div class="a" style="left:419px;top:450px;width:538.5px;height:8px;background:#3a3a3a"></div>
<div class="a" style="left:420px;top:451px;width:8px;height:7px;background:#5e5e5e"></div>
<svg class="a" style="left:422px;top:452.5px" width="4" height="4" viewBox="0 0 4 4"><path d="M3.3 0.3v3.4L0.6 2z" fill="#e8e8e8"/></svg>
<div class="a" style="left:479px;top:451px;width:269px;height:7px;background:#575757"></div>
<div class="a" style="left:950px;top:451px;width:7px;height:7px;background:#5e5e5e"></div>
<svg class="a" style="left:951.5px;top:452.5px" width="4" height="4" viewBox="0 0 4 4"><path d="M0.7 0.3v3.4L3.4 2z" fill="#e8e8e8"/></svg>
<div class="a" style="left:0;top:458px;width:960px;height:12px;background:#2a2a2a"></div>
<div class="a" style="left:957px;top:17px;width:1px;height:441px;background:#111"></div>
<div class="a" style="left:958px;top:0;width:2px;height:458px;background:#1d4fa0"></div>
<div class="t" style="left:6px;top:461.6px;font-size:5.6px;font-weight:bold;color:#e8e8e8">Ready</div>
<svg class="a" style="left:36px;top:459.5px" width="10" height="10" viewBox="0 0 10 10"><g fill="none" stroke="#d8d8d8" stroke-width="0.8"><path d="M5.5 1l3.5 3.5-1.3 0.6-2.2 2.4 0.2 1.5-4-4 1.5 0.2 2.4-2.2z"/><path d="M3.2 6.8L0.8 9.2"/></g></svg>
<div class="t" style="left:46px;top:461.5px;font-size:5.75px;color:#e2e2e2">New Tasks : Manually Scheduled</div>
<svg class="a" style="left:788px;top:460px" width="10" height="9" viewBox="0 0 10 9"><g fill="none" stroke="#d0d0d0" stroke-width="0.8"><rect x="1" y="1" width="8" height="7"/><path d="M1 3.5h8M3.5 1v7"/></g></svg>
<svg class="a" style="left:808px;top:460px" width="10" height="9" viewBox="0 0 10 9"><g fill="none" stroke="#d0d0d0" stroke-width="0.8"><rect x="1" y="1" width="8" height="7"/><path d="M1 3.5h8M3.5 1v7"/></g></svg>
<svg class="a" style="left:828px;top:460px" width="10" height="9" viewBox="0 0 10 9"><g fill="none" stroke="#d0d0d0" stroke-width="0.8"><rect x="1" y="1" width="8" height="7"/><path d="M1 3.5h8M3.5 1v7"/></g></svg>
<svg class="a" style="left:848px;top:460px" width="10" height="9" viewBox="0 0 10 9"><g fill="none" stroke="#d0d0d0" stroke-width="0.8"><rect x="1" y="1" width="8" height="7"/><path d="M1 3.5h8M3.5 1v7"/></g></svg>
<svg class="a" style="left:869px;top:460px" width="8" height="9" viewBox="0 0 8 9"><rect x="1" y="1" width="6" height="7" fill="none" stroke="#d0d0d0" stroke-width="0.8"/></svg>
<div class="a" style="left:886px;top:464px;width:3px;height:1px;background:#777"></div>
<div class="a" style="left:893px;top:464px;width:50px;height:1px;background:#bdbdbd"></div>
<div class="a" style="left:918px;top:462px;width:1px;height:4px;background:#d8d8d8"></div>
<div class="t" style="left:945px;top:460.5px;font-size:7px;color:#777">+</div>
<svg class="a" style="left:419px;top:102px" width="531" height="246" viewBox="419 102 531 246">
<defs><linearGradient id="bg1" x1="0" y1="0" x2="0" y2="1"><stop offset="0" stop-color="#b3d3f6"/><stop offset="0.45" stop-color="#82b6ee"/><stop offset="0.55" stop-color="#82b6ee"/><stop offset="1" stop-color="#b3d3f6"/></linearGradient></defs>
<rect x="444" y="103.5" width="117.5" height="5.5" fill="#90bdee"/>
<rect x="444" y="105.5" width="117.5" height="1.8" fill="#2c7bd6"/>
<rect x="561" y="115" width="351.5" height="2" fill="#8f8f8f"/>
<rect x="560.7" y="115.5" width="1.8" height="5.5" fill="#555"/>
<rect x="910.9" y="115.5" width="1.8" height="5.5" fill="#555"/>
<rect x="561.5" y="127.5" width="156.0" height="5.5" fill="#90bdee"/>
<rect x="561.5" y="129.5" width="69.5" height="1.8" fill="#2c7bd6"/>
<rect x="561" y="139" width="287" height="2" fill="#8f8f8f"/>
<rect x="560.7" y="139.5" width="1.8" height="5.5" fill="#555"/>
<rect x="846.4" y="139.5" width="1.8" height="5.5" fill="#555"/>
<rect x="561.5" y="151.5" width="103.5" height="5.5" fill="#90bdee"/>
<rect x="561.5" y="153.5" width="103.5" height="1.8" fill="#2c7bd6"/>
<rect x="717.5" y="163.5" width="52.0" height="5.3" fill="#94c0ee"/>
<rect x="561.5" y="175.5" width="285.5" height="5.5" fill="#90bdee"/>
<rect x="561.5" y="177.5" width="175.5" height="1.8" fill="#2c7bd6"/>
<rect x="847.5" y="187.5" width="64.20000000000005" height="5.3" fill="#94c0ee"/>
<path d="M561.5 106.3h2v7" fill="none" stroke="#3a86dc" stroke-width="1"/>
<path d="M561.3 112.8h4.6l-2.3 2.4z" fill="#3a86dc"/>
<path d="M717.5 130.2h2v30" fill="none" stroke="#5a9be6" stroke-width="1"/>
<path d="M665 154.5h52.5q2 0 2 2v3" fill="none" stroke="#5a9be6" stroke-width="1"/>
<path d="M717 160.3h5l-2.5 2.6z" fill="#3a86dc"/>
<path d="M848 140h1.6v43.5" fill="none" stroke="#444" stroke-width="0.9"/>
<path d="M847.3 183.5h4.6l-2.3 3z" fill="#222"/>
<path d="M912.5 116h1.4v81" fill="none" stroke="#555" stroke-width="0.9"/>
<path d="M911.7 197h4.4l-2.2 2.8z" fill="#222"/>
<path d="M912.5 199.5l2.3 2.3-2.3 2.3-2.3-2.3z" fill="#fff" stroke="#666" stroke-width="0.9"/>
<circle cx="912.5" cy="201.8" r="0.8" fill="#444"/>
<text x="565" y="109" font-family="Liberation Sans" font-weight="bold" font-size="6.4" fill="#111">Takafumi Ohtake</text>
<text x="720.8" y="133" font-family="Liberation Sans" font-weight="bold" font-size="6.2" fill="#111">Takafumi Ohtake[50%]</text>
<text x="668.3" y="157" font-family="Liberation Sans" font-weight="bold" font-size="6.4" fill="#111">Sean Osawa</text>
<text x="773" y="169" font-family="Liberation Sans" font-weight="bold" font-size="6.2" fill="#111">Takafumi Ohtake[80%],Kenichi Abe[30%]</text>
<text x="851" y="181" font-family="Liberation Sans" font-weight="bold" font-size="6.2" fill="#111">Kenichi Abe[50%]</text>
<text x="916" y="193" font-family="Liberation Sans" font-weight="bold" font-size="6.4" fill="#111">Sean Osawa</text>
<text x="918.5" y="205" font-family="Liberation Sans" font-weight="bold" font-size="6.4" fill="#111">12/06</text>
<path d="M678.5 102 L678.5 113.4 L673.4 118.5 L678.5 125.5 L639.6 130 L735.7 142.1 L678.5 149.2 L678.5 173.6 L737.5 178.1 L678.5 185.5 L678.5 348" fill="none" stroke="#c24848" stroke-width="1"/>
<circle cx="673.4" cy="118.5" r="2.5" fill="#f3d0d0" stroke="#c42424" stroke-width="1"/>
<circle cx="673.4" cy="118.5" r="1.5" fill="#a80808"/>
<circle cx="639.6" cy="130" r="2.5" fill="#f3d0d0" stroke="#c42424" stroke-width="1"/>
<circle cx="639.6" cy="130" r="1.5" fill="#a80808"/>
<circle cx="735.7" cy="142.1" r="2.5" fill="#f3d0d0" stroke="#c42424" stroke-width="1"/>
<circle cx="735.7" cy="142.1" r="1.5" fill="#a80808"/>
<circle cx="737.5" cy="178.1" r="2.5" fill="#f3d0d0" stroke="#c42424" stroke-width="1"/>
<circle cx="737.5" cy="178.1" r="1.5" fill="#a80808"/>
</svg>
</body></html>
